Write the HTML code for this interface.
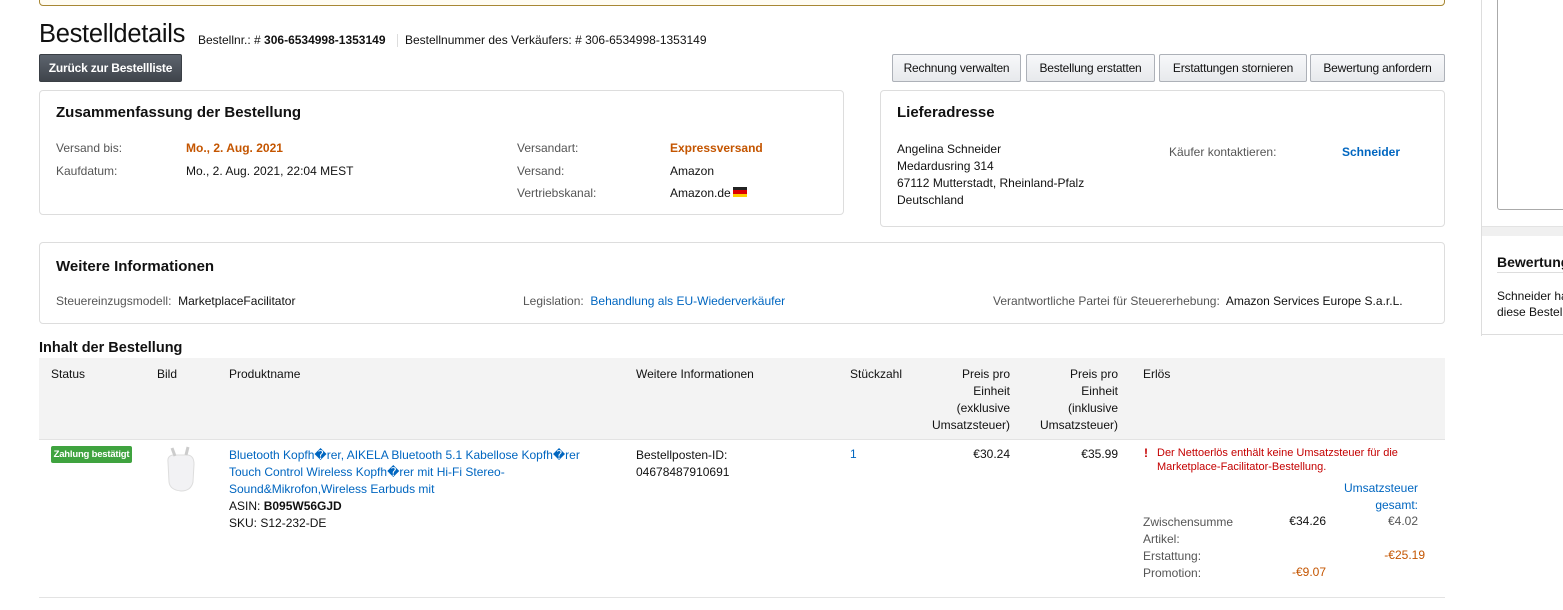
<!DOCTYPE html>
<html><head><meta charset="utf-8"><style>
*{margin:0;padding:0;box-sizing:border-box}
body{width:1563px;height:610px;overflow:hidden;background:#fff;font-family:"Liberation Sans",sans-serif;font-size:12px;color:#111;position:relative;letter-spacing:0}
.a{position:absolute;white-space:nowrap}
.box{position:absolute;border:1px solid #ddd;border-radius:4px;background:#fff}
.g{color:#555}
.lk{color:#0066c0}
.or{color:#c45500;font-weight:bold}
.h3{font-size:15px;font-weight:bold;color:#111}
.btn{position:absolute;top:54px;height:28px;border:1px solid #adb1b8;border-radius:2px;background:linear-gradient(#f7f8fa,#e7e9ec);text-align:center;line-height:26px;font-size:12px;color:#111;letter-spacing:-0.2px}
.th{position:absolute;top:366px;line-height:17px;color:#111}
</style></head><body>
<div style="position:absolute;left:39px;top:-5px;width:1406px;height:11px;border:1px solid #a88734;border-radius:4px;background:#fffcf2"></div>

<div class="a" style="left:39px;top:20px;font-size:25.5px;color:#111;letter-spacing:-0.3px">Bestelldetails</div>
<div class="a" style="left:198px;top:33px;font-size:12px">Bestellnr.: # <b>306-6534998-1353149</b></div>
<div style="position:absolute;left:397px;top:34px;width:1px;height:13px;background:#ddd"></div>
<div class="a" style="left:405px;top:33px">Bestellnummer des Verkäufers: # 306-6534998-1353149</div>

<div style="position:absolute;left:39px;top:54px;width:143px;height:28px;background:linear-gradient(#5d646e,#3f444b);border:1px solid #3a3f45;border-radius:2px;color:#fff;font-weight:bold;text-align:center;line-height:26px;font-size:12px;letter-spacing:-0.2px">Zurück zur Bestellliste</div>

<div class="btn" style="left:892px;width:129px">Rechnung verwalten</div>
<div class="btn" style="left:1026px;width:129px">Bestellung erstatten</div>
<div class="btn" style="left:1159px;width:148px">Erstattungen stornieren</div>
<div class="btn" style="left:1310px;width:135px">Bewertung anfordern</div>

<div class="box" style="left:39px;top:90px;width:805px;height:125px"></div>
<div class="a h3" style="left:56px;top:104px">Zusammenfassung der Bestellung</div>
<div class="a g" style="left:56px;top:141px">Versand bis:</div>
<div class="a or" style="left:186px;top:141px">Mo., 2. Aug. 2021</div>
<div class="a g" style="left:56px;top:164px">Kaufdatum:</div>
<div class="a" style="left:186px;top:164px">Mo., 2. Aug. 2021, 22:04 MEST</div>
<div class="a g" style="left:517px;top:141px">Versandart:</div>
<div class="a or" style="left:670px;top:141px">Expressversand</div>
<div class="a g" style="left:517px;top:164px">Versand:</div>
<div class="a" style="left:670px;top:164px">Amazon</div>
<div class="a g" style="left:517px;top:186px">Vertriebskanal:</div>
<div class="a" style="left:670px;top:186px">Amazon.de</div>
<div style="position:absolute;left:733px;top:187px;width:14px;height:10px"><div style="height:33%;background:#222"></div><div style="height:34%;background:#d00"></div><div style="height:33%;background:#fc0"></div></div>

<div class="box" style="left:880px;top:90px;width:565px;height:137px"></div>
<div class="a h3" style="left:897px;top:104px">Lieferadresse</div>
<div class="a" style="left:897px;top:141px;line-height:17px">Angelina Schneider<br>Medardusring 314<br>67112 Mutterstadt, Rheinland-Pfalz<br>Deutschland</div>
<div class="a g" style="left:1169px;top:145px">Käufer kontaktieren:</div>
<div class="a lk" style="left:1342px;top:145px;font-weight:bold">Schneider</div>

<div class="box" style="left:39px;top:242px;width:1406px;height:82px"></div>
<div class="a h3" style="left:56px;top:258px">Weitere Informationen</div>
<div class="a" style="left:56px;top:294px"><span class="g">Steuereinzugsmodell:</span>&nbsp; MarketplaceFacilitator</div>
<div class="a" style="left:523px;top:294px"><span class="g">Legislation:</span>&nbsp; <span class="lk">Behandlung als EU-Wiederverkäufer</span></div>
<div class="a" style="left:993px;top:294px"><span class="g">Verantwortliche Partei für Steuererhebung:</span>&nbsp; Amazon Services Europe S.a.r.L.</div>

<div class="a h3" style="left:39px;top:340px;font-size:14.5px">Inhalt der Bestellung</div>
<div style="position:absolute;left:39px;top:358px;width:1406px;height:82px;background:#f3f3f3;border-bottom:1px solid #e3e3e3"></div>
<div class="th" style="left:51px">Status</div>
<div class="th" style="left:157px">Bild</div>
<div class="th" style="left:229px">Produktname</div>
<div class="th" style="left:636px">Weitere Informationen</div>
<div class="th" style="left:850px">Stückzahl</div>
<div class="th" style="left:930px;width:80px;text-align:right">Preis pro<br>Einheit<br>(exklusive<br>Umsatzsteuer)</div>
<div class="th" style="left:1038px;width:80px;text-align:right">Preis pro<br>Einheit<br>(inklusive<br>Umsatzsteuer)</div>
<div class="th" style="left:1143px">Erlös</div>

<div style="position:absolute;left:51px;top:446px;width:81px;height:17px;background:#3fa33f;border-radius:2px;color:#fff;font-weight:bold;font-size:9.5px;text-align:center;line-height:17px;letter-spacing:-0.2px">Zahlung bestätigt</div>
<svg style="position:absolute;left:160px;top:444px" width="40" height="50"><path d="M8 18 Q7 12 13 11 L28 11 Q34 12 34 20 L33 38 Q31 47 21 47 Q10 46 9 38Z" fill="#f2f2f4" stroke="#ddd"/><path d="M12 4 l3 8 M28 3 l-2 8" stroke="#ccc" stroke-width="3"/></svg>
<div class="a lk" style="left:229px;top:447px;line-height:17px">Bluetooth Kopfh�rer, AIKELA Bluetooth 5.1 Kabellose Kopfh�rer<br>Touch Control Wireless Kopfh�rer mit Hi-Fi Stereo-<br>Sound&amp;Mikrofon,Wireless Earbuds mit</div>
<div class="a" style="left:229px;top:498px;line-height:17px">ASIN: <b>B095W56GJD</b><br>SKU: S12-232-DE</div>
<div class="a" style="left:636px;top:447px;line-height:17px">Bestellposten-ID:<br>04678487910691</div>
<div class="a lk" style="left:850px;top:447px">1</div>
<div class="a" style="left:930px;top:447px;width:80px;text-align:right">€30.24</div>
<div class="a" style="left:1038px;top:447px;width:80px;text-align:right">€35.99</div>
<div class="a" style="left:1144px;top:446px;color:#c40000;font-weight:bold">!</div>
<div class="a" style="left:1157px;top:446px;line-height:14px;font-size:11px;color:#c40000">Der Nettoerlös enthält keine Umsatzsteuer für die<br>Marketplace-Facilitator-Bestellung.</div>
<div class="a lk" style="left:1318px;top:480px;width:100px;text-align:right;line-height:17px">Umsatzsteuer<br>gesamt:</div>
<div class="a g" style="left:1143px;top:514px;line-height:17px">Zwischensumme<br>Artikel:<br>Erstattung:<br>Promotion:</div>
<div class="a" style="left:1270px;top:514px;width:56px;text-align:right">€34.26</div>
<div class="a g" style="left:1360px;top:514px;width:58px;text-align:right">€4.02</div>
<div class="a" style="left:1360px;top:548px;width:65px;text-align:right;color:#c45500">-€25.19</div>
<div class="a" style="left:1270px;top:565px;width:56px;text-align:right;color:#c45500">-€9.07</div>
<div style="position:absolute;left:39px;top:597px;width:1406px;height:1px;background:#e3e3e3"></div>

<div style="position:absolute;left:1481px;top:0;width:1px;height:336px;background:#ddd"></div>
<div style="position:absolute;left:1497px;top:-5px;width:80px;height:215px;border:1px solid #aaa;border-radius:3px"></div>
<div style="position:absolute;left:1482px;top:226px;width:81px;height:10px;background:#f0f0f0;border-top:1px solid #e3e3e3"></div>
<div class="a h3" style="left:1497px;top:254px;font-size:14px">Bewertung</div>
<div style="position:absolute;left:1497px;top:272px;width:66px;height:1px;background:#ddd"></div>
<div class="a" style="left:1497px;top:288px;line-height:16px">Schneider hat<br>diese Bestellung</div>
<div style="position:absolute;left:1482px;top:334px;width:81px;height:1px;background:#ddd"></div>
</body></html>
